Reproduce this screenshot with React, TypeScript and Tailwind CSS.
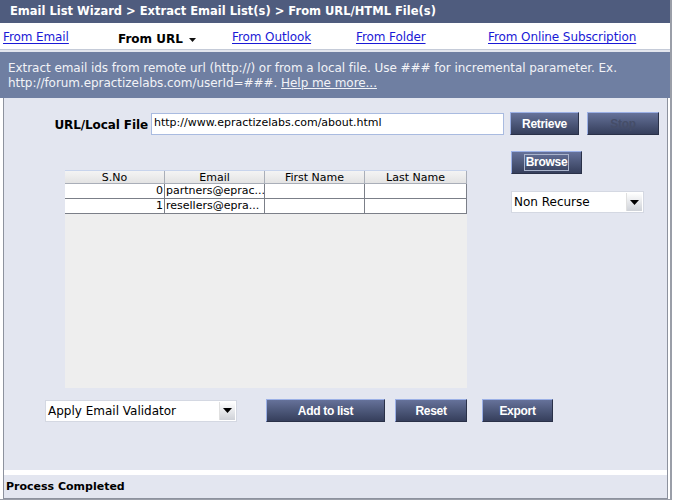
import React from 'react'

const font = "font-['DejaVu_Sans',sans-serif]"

function Btn({ label, w, disabled, focus }: { label: string; w: string; disabled?: boolean; focus?: boolean }) {
  return (
    <div
      className={`${w} h-[23px] flex items-center justify-center border border-t-[#9bb0e6] border-l-[#9bb0e6] border-r-[#2a3148] border-b-[#2a3148] bg-gradient-to-b from-[#66729a] via-[#4d587a] to-[#363f5c] font-['Liberation_Sans',sans-serif] font-bold text-[12px] tracking-[-0.3px] ${
        disabled ? 'text-[#454d68]' : 'text-white'
      }`}
    >
      <span className={focus ? 'border border-[#aab4cc] px-[1px] leading-[15px]' : ''}>{label}</span>
    </div>
  )
}

function Select({ label, w }: { label: string; w: string }) {
  return (
    <div className={`${w} h-[22px] flex items-stretch bg-white border border-[#d4d8e2]`}>
      <div className={`flex-1 flex items-center pl-[2px] text-[12px] text-black ${font}`}>{label}</div>
      <div className="w-[16px] my-[1px] mr-[1px] flex items-center justify-center bg-gradient-to-b from-[#ffffff] to-[#cfd2d8] border-l border-[#e0e0e0]">
        <svg width="9" height="5" viewBox="0 0 9 5">
          <path d="M0 0 H9 L4.5 5 Z" fill="#000" />
        </svg>
      </div>
    </div>
  )
}

const rows = [
  { n: '0', email: 'partners@eprac...' },
  { n: '1', email: 'resellers@epra...' },
]

export default function App() {
  const tabs = [
    { label: 'From Email', w: 'w-[115px]' },
    { label: 'From URL', w: 'w-[114px]', active: true },
    { label: 'From Outlook', w: 'w-[124px]' },
    { label: 'From Folder', w: 'w-[132px]' },
    { label: 'From Online Subscription', w: 'w-[170px]' },
  ]

  return (
    <div className={`w-[675px] h-[502px] bg-white ${font} overflow-hidden`}>
      <div className="w-[672px] h-[500px] flex flex-col border-r-[2px] border-b border-[#9a9ea8]">
        {/* Title */}
        <div className="h-[23px] shrink-0 bg-[#4f5c7e] flex items-center pl-[10px] text-white font-bold text-[11.5px]">
          Email List Wizard &gt; Extract Email List(s) &gt; From URL/HTML File(s)
        </div>

        {/* Tabs */}
        <div className="h-[26px] shrink-0 bg-white flex items-center pl-[3px] pt-[2px] text-[12px]">
          {tabs.map((t) =>
            t.active ? (
              <div key={t.label} className={`${t.w} flex items-center pt-[3px] font-bold text-black text-[12px]`}>
                {t.label}
                <svg className="ml-[6px] mt-[3px]" width="7" height="4" viewBox="0 0 7 4">
                  <path d="M0 0 H7 L3.5 4 Z" fill="#111" />
                </svg>
              </div>
            ) : (
              <div key={t.label} className={`${t.w} text-[#1a1ad6] underline underline-offset-[2px] tracking-[-0.1px]`}>
                {t.label}
              </div>
            )
          )}
        </div>
        <div className="h-[3px] shrink-0 bg-[#e3e6ee] border-t border-[#c5cbd8]" />

        {/* Description */}
        <div className="h-[46px] shrink-0 bg-[#6f7fa2] px-[8px] pt-[9px] text-[12px] leading-[15px] text-[#f2f3f7] tracking-[-0.05px] whitespace-nowrap">
          Extract email ids from remote url (http://) or from a local file. Use ### for incremental parameter. Ex.
          <br />
          http://forum.epractizelabs.com/userId=###. <span className="underline">Help me more...</span>
        </div>

        {/* Body */}
        <div className="flex-1 flex flex-col ml-[3px] mr-[2px] border-l border-r border-[#8d929e] bg-[#e3e6f0]">
          <div className="flex-1 flex flex-col pt-[14px]">
            <div className="flex items-center">
              <div className="w-[147px] pr-[3px] text-right font-bold text-[12px] text-black pt-[2px] tracking-[-0.1px]">URL/Local File</div>
              <div className="w-[353px] h-[22px] bg-white border border-[#a9bbe0] flex items-center pl-[2px] text-[11px] text-black">
                http://www.epractizelabs.com/about.html
              </div>
              <div className="ml-[6px] flex gap-[8px]">
                <Btn label="Retrieve" w="w-[69px]" />
                <Btn label="Stop" w="w-[72px]" disabled />
              </div>
            </div>

            <div className="flex">
              {/* Table */}
              <div className="ml-[61px] mt-[35px] w-[402px] h-[218px] bg-[#eeeeee] text-[11px] text-black">
                <div className="flex h-[14px] bg-gradient-to-b from-[#f4f4f4] to-[#e2e2e2] border-t border-[#c8d4ec] leading-[13px]">
                  {['S.No', 'Email', 'First Name', 'Last Name'].map((h, i) => (
                    <div key={h} className={`w-[100px] text-center border-r border-b border-[#a9aeb8] ${i === 3 ? 'flex-1' : ''}`}>
                      {h}
                    </div>
                  ))}
                </div>
                {rows.map((r) => (
                  <div key={r.n} className="flex h-[15px] bg-white leading-[14px]">
                    <div className="w-[100px] text-right pr-[1px] border-r border-b border-[#7b7f88]">{r.n}</div>
                    <div className="w-[100px] pl-[1px] border-r border-b border-[#7b7f88] overflow-hidden whitespace-nowrap">{r.email}</div>
                    <div className="w-[100px] border-r border-b border-[#7b7f88]" />
                    <div className="flex-1 border-r border-b border-[#7b7f88]" />
                  </div>
                ))}
              </div>

              {/* Right column */}
              <div className="ml-[44px] mt-[16px] flex flex-col">
                <Btn label="Browse" w="w-[71px]" focus />
                <div className="mt-[17px]">
                  <Select label="Non Recurse" w="w-[133px]" />
                </div>
              </div>
            </div>

            <div className="flex items-center mt-[11px] ml-[41px]">
              <Select label="Apply Email Validator" w="w-[192px]" />
              <div className="ml-[29px] flex">
                <Btn label="Add to list" w="w-[119px]" />
                <div className="ml-[10px]">
                  <Btn label="Reset" w="w-[72px]" />
                </div>
                <div className="ml-[15px]">
                  <Btn label="Export" w="w-[71px]" />
                </div>
              </div>
            </div>
          </div>

          <div className="h-[5px] shrink-0 bg-white mb-[1px]" />
          <div className="h-[23px] shrink-0 flex items-center pl-[2px] font-bold text-[11px] text-black border-b border-[#8d929e]">
            Process Completed
          </div>
        </div>
      </div>
    </div>
  )
}
